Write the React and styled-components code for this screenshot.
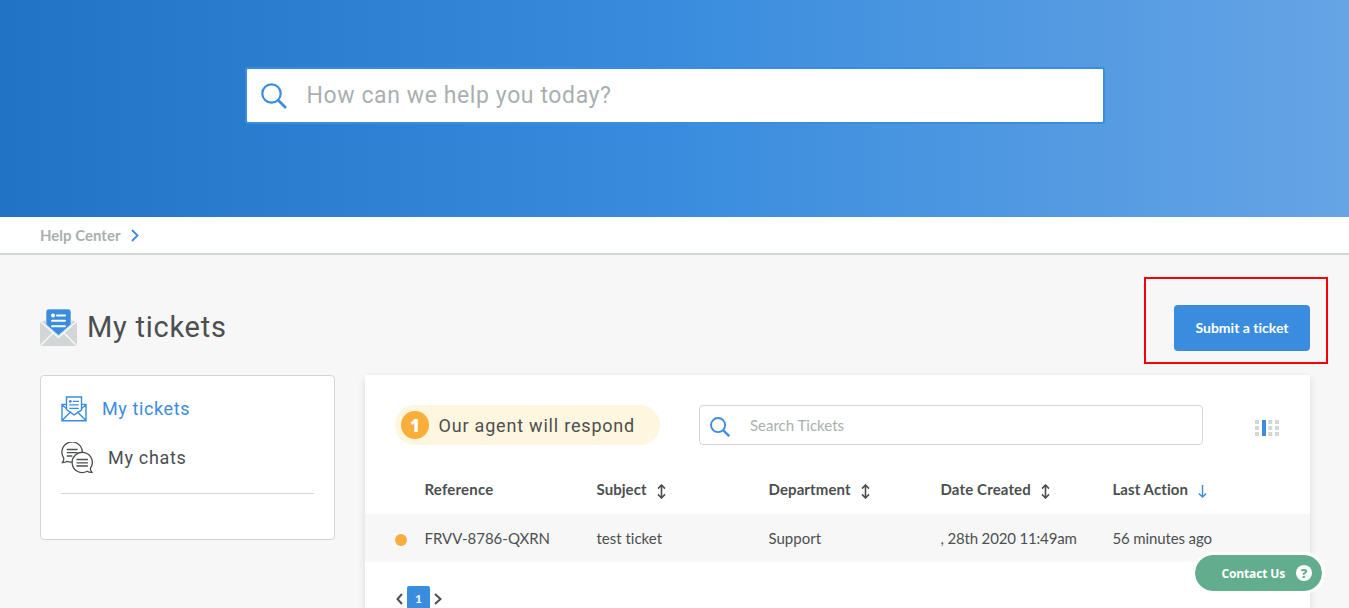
import React from "react";
import styled, { createGlobalStyle } from "styled-components";

const Global = createGlobalStyle`
  * { box-sizing: border-box; }
  html, body { margin: 0; height: 100%; overflow: hidden; }
  body {
    background: #f7f7f7;
    color: #4c4f50;
    font-family: Lato, "Open Sans", sans-serif;
    font-size: 15px;
    font-variant-ligatures: none;
  }
  svg { display: block; flex: none; }
`;

const Page = styled.div`
  position: relative;
  height: 608px;
  overflow: hidden;
`;

const Hero = styled.header`
  display: flex;
  justify-content: center;
  height: 217px;
  padding: 67px 0 0 1px;
  background: linear-gradient(90deg, #2173c5 0%, #3a8dde 51%, #66a4e5 100%);
`;

const HeroSearch = styled.div`
  display: flex;
  align-items: center;
  width: 860px;
  height: 57px;
  padding-left: 14px;
  background: #fff;
  border: 2px solid #3a8dde;
  border-radius: 3px;
`;

const Heading = styled.span`
  font-family: Roboto, sans-serif;
  font-size: ${(p) => p.$size}px;
  letter-spacing: ${(p) => p.$track || 0}px;
  color: ${(p) => p.$color || "inherit"};
  white-space: nowrap;
  line-height: 1.2;
`;

const HeroPrompt = styled(Heading)`
  margin-left: 19.5px;
  padding-top: 1px;
`;

const Breadcrumb = styled.nav`
  display: flex;
  align-items: center;
  gap: 11px;
  height: 38px;
  padding: 0 40px;
  background: #fff;
  border-bottom: 2px solid #d2d6d6;
  color: #a9afb0;
  font-weight: 700;
  font-size: 15px;
`;

const TitleBar = styled.div`
  display: flex;
  justify-content: space-between;
  height: 120px;
  padding: 22px 21px 0 40px;
`;

const Title = styled.h1`
  display: flex;
  align-items: center;
  gap: 10px;
  height: 38px;
  margin: 31px 0 0;
  font-weight: 400;
`;

const Highlight = styled.div`
  width: 184px;
  height: 87px;
  padding: 26px 0 0 28px;
  border: 2px solid #f80008;
`;

const SubmitButton = styled.button`
  width: 136px;
  height: 46px;
  padding: 0 0 2px;
  border: 0;
  border-radius: 4px;
  background: #3a8dde;
  color: #fff;
  font: 700 14px Lato, sans-serif;
  font-variant-ligatures: none;
`;

const Columns = styled.main`
  display: flex;
  align-items: flex-start;
  gap: 30px;
  padding: 0 39px 0 40px;
`;

const Sidebar = styled.aside`
  width: 295px;
  height: 165px;
  padding: 20px;
  background: #fff;
  border: 1px solid #d2d6d6;
  border-radius: 4px;
`;

const SideLink = styled.a`
  display: flex;
  align-items: center;
  gap: ${(p) => p.$gap}px;
  height: ${(p) => p.$height}px;
  margin-bottom: ${(p) => p.$after}px;
  color: ${(p) => (p.$active ? "#3a8dde" : "#4c4f50")};
`;

const Divider = styled.div`
  height: 1px;
  background: #d2d6d6;
`;

const Panel = styled.section`
  width: 945px;
  height: 300px;
  background: #fff;
  box-shadow: 0 3px 8px rgba(0, 0, 0, 0.12);
`;

const Toolbar = styled.div`
  display: flex;
  align-items: flex-start;
  padding: 30px 31px 0 30px;
`;

const StatusPill = styled.div`
  display: flex;
  align-items: center;
  gap: 9.5px;
  width: 265px;
  height: 40px;
  padding-left: 6px;
  border-radius: 20px;
  background: #fff6df;
`;

const StatusText = styled(Heading)`
  padding-top: 2px;
`;

const Count = styled.span`
  display: flex;
  align-items: center;
  justify-content: center;
  width: 28px;
  height: 28px;
  border-radius: 50%;
  background: #f9ae3b;
  color: #fff;
  font: 800 17px "Open Sans", sans-serif;
`;

const TicketSearch = styled.div`
  display: flex;
  align-items: center;
  gap: 20px;
  width: 504px;
  height: 40px;
  margin: 0 52px 0 39px;
  padding-left: 10px;
  border: 1px solid #d2d6d6;
  border-radius: 4px;
  color: #a9afb0;
  svg { margin-top: 4px; }
`;

const ColumnsIcon = styled.svg`
  margin-top: 15px;
`;

const Row = styled.div`
  display: grid;
  grid-template-columns: 29.5px repeat(5, 172px);
  align-items: center;
  height: 48px;
  padding-left: 30px;
  margin-top: ${(p) => p.$gap || 0}px;
  background: ${(p) => (p.$shaded ? "#f7f7f7" : "transparent")};
  font-weight: ${(p) => (p.$bold ? 700 : 400)};
  white-space: nowrap;
`;

const Cell = styled.span`
  display: flex;
  align-items: center;
  gap: 10px;
  letter-spacing: ${(p) => p.$track || 0}px;
`;

const HeaderCell = styled(Cell)`
  padding-bottom: 2px;
  svg { margin-top: 5px; }
`;

const Dot = styled.span`
  width: 12px;
  height: 12px;
  margin-top: 3px;
  border-radius: 50%;
  background: #f9ae3b;
`;

const Pager = styled.div`
  display: flex;
  align-items: center;
  gap: 4px;
  padding: 24px 0 0 31px;
`;

const PageNumber = styled.span`
  width: 23px;
  height: 26px;
  border-radius: 2px;
  background: #3a8dde;
  color: #fff;
  font: 700 12px/25px Lato, sans-serif;
  text-align: center;
`;

const ContactButton = styled.button`
  position: absolute;
  left: 1192px;
  top: 552px;
  display: flex;
  align-items: center;
  gap: 11px;
  width: 133px;
  height: 42px;
  padding: 0 0 0 26.5px;
  border: 3px solid #fff;
  border-radius: 21px;
  background: #62ad8e;
  background-clip: padding-box;
  color: #fff;
  font: 700 12px "Open Sans", sans-serif;
  letter-spacing: -0.15px;
`;

const Question = styled.span`
  width: 16px;
  height: 16px;
  border-radius: 50%;
  background: #fff;
  color: #62ad8e;
  font: 800 13px/16px "Open Sans", sans-serif;
  text-align: center;
`;

const SearchIcon = ({ size, stroke }) => (
  <svg width={size} height={size} viewBox="0 0 26 26" fill="none" stroke="#3a8dde" strokeWidth={stroke}>
    <circle cx="10.5" cy="10.5" r="9.2" />
    <path d="M17.2 17.2 25 25" strokeWidth={stroke * 1.25} />
  </svg>
);

const Chevron = ({ width, height, color, stroke, left }) => (
  <svg width={width} height={height} viewBox={`0 0 ${width} ${height}`} fill="none" stroke={color} strokeWidth={stroke}>
    <path
      d={
        left
          ? `M${width - 1} 1 1.5 ${height / 2} ${width - 1} ${height - 1}`
          : `M1 1 ${width - 1.5} ${height / 2} 1 ${height - 1}`
      }
    />
  </svg>
);

const MailSolid = () => (
  <svg width="37" height="38" viewBox="0 0 37 38" fill="none">
    <path d="M0 14 6.5 12h24L37 14v23.9H0z" fill="#d2d6d6" />
    <path d="M0 13 18.5 29.5 37 13M.5 37.5 13.5 24.5M36.5 37.5 23.5 24.5" stroke="#f7f7f7" strokeWidth="1.5" />
    <path d="M6 4a3 3 0 0 1 3-3h19a3 3 0 0 1 3 3v12.5L18.5 27.5 6 16.5z" fill="#3a8dde" stroke="#f7f7f7" strokeWidth="0.6" />
    <circle cx="13" cy="7.4" r="2" fill="#fff" />
    <path d="M17 7.4h8M12 12.8h13M12 18.2h13" stroke="#fff" strokeWidth="2" strokeLinecap="round" />
  </svg>
);

const MailOutline = () => (
  <svg width="26" height="26" viewBox="0 0 26 26" fill="none" stroke="#3a8dde" strokeWidth="1.4">
    <path d="M5.5 8.4H1v16.4h24V8.4h-4.5M1 8.8l4.5 3.7M25 8.8l-4.5 3.7M1 24.5l8.8-8.8M25 24.5l-8.8-8.8" />
    <path d="M5.5 14V1h15v13L13 18.8 5.5 13.5z" />
    <path d="M12 5.4h6M8.3 8.9h9.4M8.3 12.4h9.4" />
    <circle cx="9.3" cy="5.4" r="1.4" fill="#3a8dde" stroke="none" />
  </svg>
);

const Chats = () => (
  <svg width="32" height="32" viewBox="0 0 32 32" fill="none" stroke="#4c4f50" strokeWidth="1.3">
    <path d="M21.3 10.2A10.2 10.2 0 1 0 2.6 15.8C3.2 17.6 2.2 19.4 1.4 20.6c1.8.1 3.4-.5 4.5-1.3a10 10 0 0 0 5.5.6" />
    <path d="M5.8 7.5h10.8M5.8 10.7h10.8M5.8 14h5.5" />
    <path d="M29.5 26.2a10.1 10.1 0 1 0-3.3 3c1.3.9 3 1.4 4.8 1.1-.9-.9-1.8-2.5-1.5-4.1z" />
    <path d="M15.5 17.5h11.4M15.5 20.8h11.4M15.5 24h11.4" />
  </svg>
);

const SortIcon = () => (
  <svg width="9" height="15" viewBox="0 0 9 15" fill="none" stroke="#4c4f50" strokeWidth="1.6">
    <path d="M4.5 1v13M1 4.6 4.5 1 8 4.6M1 10.4 4.5 14 8 10.4" />
  </svg>
);

const DownIcon = () => (
  <svg width="9" height="13" viewBox="0 0 9 13" fill="none" stroke="#3a8dde" strokeWidth="1.4">
    <path d="M4.5 0v12M.8 8.4 4.5 12l3.7-3.6" />
  </svg>
);

const headers = [
  { label: "Reference", track: 0.2 },
  { label: "Subject", icon: <SortIcon />, track: 0.05 },
  { label: "Department", icon: <SortIcon />, track: 0.1 },
  { label: "Date Created", icon: <SortIcon />, track: 0.14 },
  { label: "Last Action", icon: <DownIcon />, track: 0.08 },
];

const ticket = [
  { text: "FRVV-8786-QXRN" },
  { text: "test ticket" },
  { text: "Support" },
  { text: ", 28th 2020 11:49am", track: -0.16 },
  { text: "56 minutes ago", track: -0.13 },
];

export default function App() {
  return (
    <Page>
      <Global />
      <Hero>
        <HeroSearch>
          <SearchIcon size={26} stroke={2.2} />
          <HeroPrompt $size={23} $track={0.6} $color="#a9afb0">How can we help you today?</HeroPrompt>
        </HeroSearch>
      </Hero>
      <Breadcrumb>
        Help Center
        <Chevron width={8} height={13} color="#3a8dde" stroke={1.8} />
      </Breadcrumb>
      <TitleBar>
        <Title>
          <MailSolid />
          <Heading $size={29} $track={0.75}>My tickets</Heading>
        </Title>
        <Highlight>
          <SubmitButton>Submit a ticket</SubmitButton>
        </Highlight>
      </TitleBar>
      <Columns>
        <Sidebar>
          <SideLink $active $gap={15} $height={26} $after={20}>
            <MailOutline />
            <Heading $size={18} $track={0.6}>My tickets</Heading>
          </SideLink>
          <SideLink $gap={15} $height={32} $after={19}>
            <Chats />
            <Heading $size={18} $track={0.7}>My chats</Heading>
          </SideLink>
          <Divider />
        </Sidebar>
        <Panel>
          <Toolbar>
            <StatusPill>
              <Count>1</Count>
              <StatusText $size={18} $track={0.8}>Our agent will respond</StatusText>
            </StatusPill>
            <TicketSearch>
              <SearchIcon size={20} stroke={2.4} />
              Search Tickets
            </TicketSearch>
            <ColumnsIcon width="24" height="16" viewBox="0 0 24 16">
              {[0, 13.3, 20].map((x) =>
                [0, 6, 12].map((y) => <rect key={`${x}-${y}`} x={x} y={y} width="4" height="4" fill="#d2d6d6" />)
              )}
              <rect x="7" y="0" width="4" height="16" fill="#3a8dde" />
            </ColumnsIcon>
          </Toolbar>
          <Row $bold $gap={21}>
            <span />
            {headers.map((h) => (
              <HeaderCell key={h.label} $track={h.track}>
                {h.label}
                {h.icon}
              </HeaderCell>
            ))}
          </Row>
          <Row $shaded>
            <Dot />
            {ticket.map((t) => (
              <Cell key={t.text} $track={t.track}>{t.text}</Cell>
            ))}
          </Row>
          <Pager>
            <Chevron left width={7} height={12} color="#4c4f50" stroke={2} />
            <PageNumber>1</PageNumber>
            <Chevron width={8} height={12} color="#4c4f50" stroke={2} />
          </Pager>
        </Panel>
      </Columns>
      <ContactButton>
        Contact Us
        <Question>?</Question>
      </ContactButton>
    </Page>
  );
}
